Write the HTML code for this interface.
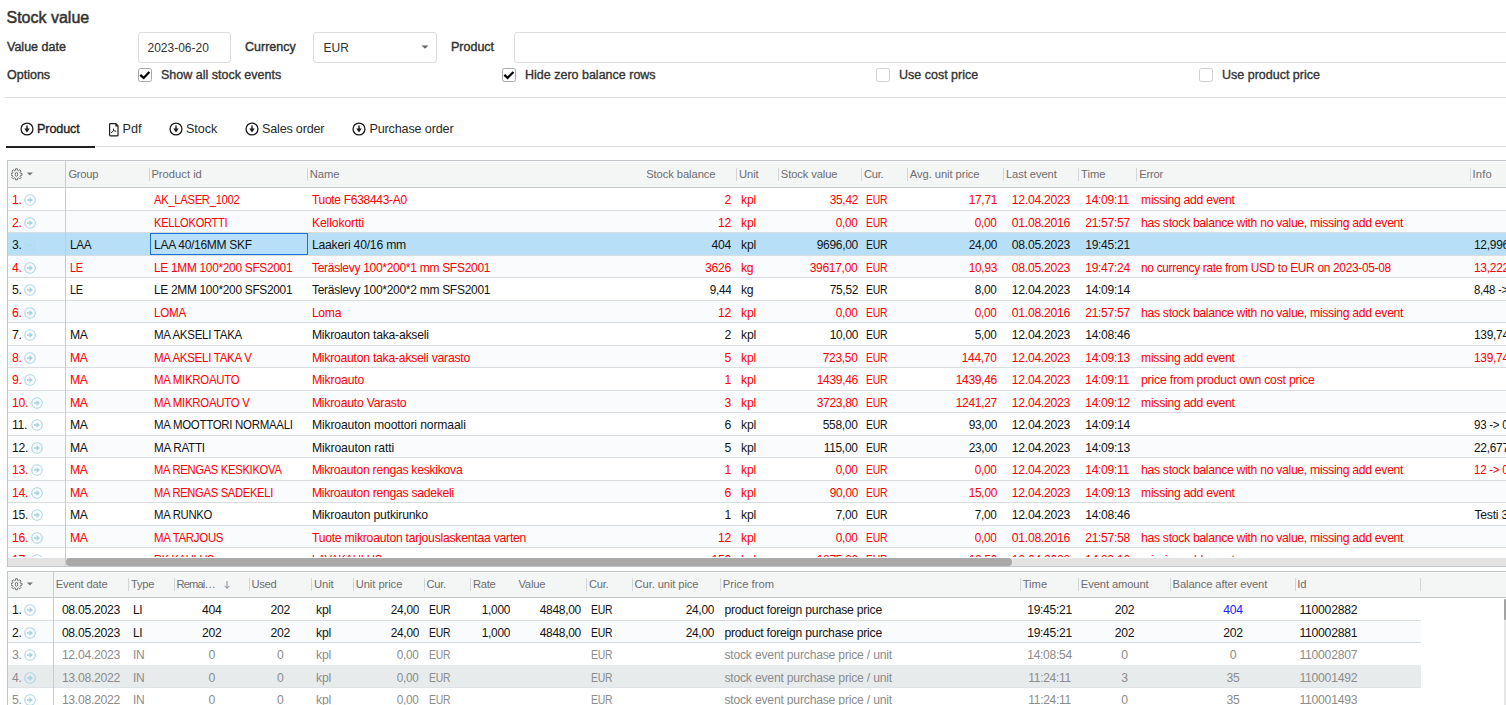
<!DOCTYPE html><html><head><meta charset="utf-8"><style>
*{box-sizing:border-box;margin:0;padding:0}
html,body{width:1506px;height:705px;overflow:hidden;background:#fff}
body{font-family:"Liberation Sans",sans-serif;color:#212121;position:relative}
.a{position:absolute;white-space:nowrap}
.ln{position:absolute}
.lbl{position:absolute;font-size:12.5px;color:#333;white-space:nowrap;line-height:14px;-webkit-text-stroke:0.4px #333}
.inp{position:absolute;border:1px solid #dcdcdc;border-radius:3px;background:#fff}
.cb{position:absolute;width:14px;height:14px;border:1px solid #a6a6a6;border-radius:2.5px;background:#fff}
.cbu{border-color:#cfcfcf}
.cbt{position:absolute;font-size:12.5px;color:#333;white-space:nowrap;-webkit-text-stroke:0.35px #333;line-height:14px}
.tab{position:absolute;font-size:12.6px;color:#2a2a2a;white-space:nowrap;top:121px;line-height:16px}
.hc{position:absolute;font-size:11.2px;color:#6e6e6e;white-space:nowrap;line-height:13px}
.c{position:absolute;font-size:12.2px;letter-spacing:-0.2px;white-space:nowrap;overflow:hidden;line-height:14px}
</style></head><body>
<div class="a" style="left:6.5px;top:8.5px;font-size:16px;color:#333;line-height:17px;-webkit-text-stroke:0.5px #333">Stock value</div>
<div class="lbl" style="left:7px;top:40px">Value date</div>
<div class="inp" style="left:138px;top:32px;width:93px;height:31px"></div>
<div class="a" style="left:147.5px;top:41px;font-size:12px;color:#333;line-height:14px">2023-06-20</div>
<div class="lbl" style="left:245px;top:40px">Currency</div>
<div class="inp" style="left:313px;top:32px;width:124px;height:31px"></div>
<div class="a" style="left:323.5px;top:41px;font-size:12px;color:#333;line-height:14px">EUR</div>
<svg class="a" style="left:421px;top:45px" width="8" height="4"><path d="M0.5 0.5H7.5L4 3.8Z" fill="#666"/></svg>
<div class="lbl" style="left:451px;top:40px">Product</div>
<div class="inp" style="left:514px;top:32px;width:1000px;height:31px"></div>
<div class="lbl" style="left:7px;top:68px">Options</div>
<div class="cb" style="left:138px;top:68px"><svg class="a" style="left:0px;top:0px" width="12" height="12" viewBox="0 0 12 12"><path d="M1.3 5.9L4.6 8.9L10.4 2.9" fill="none" stroke="#000" stroke-width="2.2"/></svg></div>
<div class="cbt" style="left:161px;top:68px">Show all stock events</div>
<div class="cb" style="left:502px;top:68px"><svg class="a" style="left:0px;top:0px" width="12" height="12" viewBox="0 0 12 12"><path d="M1.3 5.9L4.6 8.9L10.4 2.9" fill="none" stroke="#000" stroke-width="2.2"/></svg></div>
<div class="cbt" style="left:525px;top:68px">Hide zero balance rows</div>
<div class="cb cbu" style="left:876px;top:68px"></div>
<div class="cbt" style="left:899px;top:68px">Use cost price</div>
<div class="cb cbu" style="left:1199px;top:68px"></div>
<div class="cbt" style="left:1222px;top:68px">Use product price</div>
<div class="ln" style="left:5px;top:97px;width:1501px;height:1px;background:#dedede"></div>
<svg class="a" style="left:19.6px;top:122.4px" width="14" height="14" viewBox="0 0 14 14"><circle cx="7" cy="7" r="5.95" fill="none" stroke="#1a1a1a" stroke-width="1.3"/><path d="M7 3.6V8" stroke="#1a1a1a" stroke-width="1.4"/><path d="M4.3 6.6H9.7L7 10.4Z" fill="#1a1a1a"/></svg>
<div class="tab" style="left:37px;-webkit-text-stroke:0.35px #222;color:#222"><span style="letter-spacing:-0.105px">Product</span></div>
<svg class="a" style="left:108px;top:122px" width="12" height="15" viewBox="0 0 12 15"><path d="M2.4 1.6H7.9L10 3.7V13.1Q10 13.8 9.3 13.8H2.4Q1.6 13.8 1.6 13.1V2.4Q1.6 1.6 2.4 1.6Z" fill="none" stroke="#1a1a1a" stroke-width="1.2"/><path d="M7.4 1.6V4.4H10Z" fill="#1a1a1a"/><path d="M5.5 6.6V8.6L3.2 11M5.5 8.6L8.1 9.4" fill="none" stroke="#1a1a1a" stroke-width="0.95"/></svg>
<div class="tab" style="left:122.5px"><span style="letter-spacing:0.089px">Pdf</span></div>
<svg class="a" style="left:169px;top:122.4px" width="14" height="14" viewBox="0 0 14 14"><circle cx="7" cy="7" r="5.95" fill="none" stroke="#1a1a1a" stroke-width="1.3"/><path d="M7 3.6V8" stroke="#1a1a1a" stroke-width="1.4"/><path d="M4.3 6.6H9.7L7 10.4Z" fill="#1a1a1a"/></svg>
<div class="tab" style="left:186px"><span style="letter-spacing:-0.034px">Stock</span></div>
<svg class="a" style="left:245px;top:122.4px" width="14" height="14" viewBox="0 0 14 14"><circle cx="7" cy="7" r="5.95" fill="none" stroke="#1a1a1a" stroke-width="1.3"/><path d="M7 3.6V8" stroke="#1a1a1a" stroke-width="1.4"/><path d="M4.3 6.6H9.7L7 10.4Z" fill="#1a1a1a"/></svg>
<div class="tab" style="left:262px"><span style="letter-spacing:-0.192px">Sales order</span></div>
<svg class="a" style="left:351.8px;top:122.4px" width="14" height="14" viewBox="0 0 14 14"><circle cx="7" cy="7" r="5.95" fill="none" stroke="#1a1a1a" stroke-width="1.3"/><path d="M7 3.6V8" stroke="#1a1a1a" stroke-width="1.4"/><path d="M4.3 6.6H9.7L7 10.4Z" fill="#1a1a1a"/></svg>
<div class="tab" style="left:369.4px"><span style="letter-spacing:-0.142px">Purchase order</span></div>
<div class="ln" style="left:6px;top:146px;width:1500px;height:1px;background:#dcdcdc"></div>
<div class="ln" style="left:6px;top:146px;width:89px;height:2px;background:#222"></div>
<div class="a" style="left:0;top:0;width:1506px;height:567px;overflow:hidden">
<div class="ln" style="left:8px;top:161px;width:1498px;height:26px;background:#f4f5f5"></div>
<div class="ln" style="left:8px;top:161px;width:1498px;height:1px;background:#f9fafa"></div>
<div class="hc" style="left:68.4px;top:167.5px;letter-spacing:-0.240px">Group</div>
<div class="hc" style="left:151.4px;top:167.5px;letter-spacing:0.009px">Product id</div>
<div class="hc" style="left:309.8px;top:167.5px;letter-spacing:-0.094px">Name</div>
<div class="hc" style="left:515.5px;width:200px;text-align:right;top:167.5px;letter-spacing:-0.070px">Stock balance</div>
<div class="hc" style="left:739px;top:167.5px;letter-spacing:-0.076px">Unit</div>
<div class="hc" style="left:780.8px;top:167.5px;letter-spacing:-0.106px">Stock value</div>
<div class="hc" style="left:864px;top:167.5px;letter-spacing:-0.309px">Cur.</div>
<div class="hc" style="left:909.8px;top:167.5px;letter-spacing:-0.066px">Avg. unit price</div>
<div class="hc" style="left:1005.9px;top:167.5px;letter-spacing:-0.076px">Last event</div>
<div class="hc" style="left:1081px;top:167.5px;letter-spacing:-0.005px">Time</div>
<div class="hc" style="left:1139.3px;top:167.5px;letter-spacing:-0.205px">Error</div>
<div class="hc" style="left:1472.5px;top:167.5px;letter-spacing:0.153px">Info</div>
<div class="ln" style="left:149px;top:168px;width:1px;height:13px;background:#d3d6d9"></div>
<div class="ln" style="left:307px;top:168px;width:1px;height:13px;background:#d3d6d9"></div>
<div class="ln" style="left:736px;top:168px;width:1px;height:13px;background:#d3d6d9"></div>
<div class="ln" style="left:778px;top:168px;width:1px;height:13px;background:#d3d6d9"></div>
<div class="ln" style="left:861px;top:168px;width:1px;height:13px;background:#d3d6d9"></div>
<div class="ln" style="left:907px;top:168px;width:1px;height:13px;background:#d3d6d9"></div>
<div class="ln" style="left:1003px;top:168px;width:1px;height:13px;background:#d3d6d9"></div>
<div class="ln" style="left:1078px;top:168px;width:1px;height:13px;background:#d3d6d9"></div>
<div class="ln" style="left:1136px;top:168px;width:1px;height:13px;background:#d3d6d9"></div>
<div class="ln" style="left:1470px;top:168px;width:1px;height:13px;background:#d3d6d9"></div>
<svg class="a" style="left:11px;top:167.5px" width="26" height="14" viewBox="0 0 26 14"><path d="M4.45 2.34L4.55 0.78L6.45 0.78L6.55 2.34L7.56 2.75L8.73 1.73L10.07 3.07L9.05 4.24L9.46 5.25L11.02 5.35L11.02 7.25L9.46 7.35L9.05 8.36L10.07 9.53L8.73 10.87L7.56 9.85L6.55 10.26L6.45 11.82L4.55 11.82L4.45 10.26L3.44 9.85L2.27 10.87L0.93 9.53L1.95 8.36L1.54 7.35L-0.02 7.25L-0.02 5.35L1.54 5.25L1.95 4.24L0.93 3.07L2.27 1.73L3.44 2.75Z" fill="none" stroke="#6e6e6e" stroke-width="1"/><ellipse cx="5.5" cy="6.3" rx="1.25" ry="1.95" fill="none" stroke="#6e6e6e" stroke-width="1"/><path d="M15.9 4.5H21.9L18.9 7.5Z" fill="#747474"/></svg>
<div class="a" style="left:0;top:188px;width:1506px;height:369px;overflow:hidden">
<div class="a" style="left:8px;top:0px;width:1498px;height:23px;background:#fff;border-bottom:1px solid #d9dde0;color:#ff0000">
<div class="c" style="left:4px;top:4.5px;letter-spacing:-0.338px">1.</div>
<svg class="a" style="left:16px;top:6px;opacity:1.0" width="12" height="12" viewBox="0 0 12 12"><circle cx="6" cy="6" r="5.3" fill="none" stroke="#a8d4e2" stroke-width="1.05"/><path d="M3.0 6H6.6" stroke="#a8d4e2" stroke-width="1.6"/><path d="M5.5 3.1L9.0 6L5.5 8.9Z" fill="#a8d4e2"/></svg>
<div class="c" style="left:145.70000000000002px;width:153.69999999999996px;top:4.5px"><span style="display:inline-block;letter-spacing:-0.300px;transform:scaleX(0.9187);transform-origin:left">AK_LASER_1002</span></div>
<div class="c" style="left:303.9px;width:328.1px;top:4.5px"><span style="display:inline-block;letter-spacing:-0.300px;transform:scaleX(0.9841);transform-origin:left">Tuote F638443-A0</span></div>
<div class="c" style="left:632px;width:91.1px;text-align:right;top:4.5px"><span style="letter-spacing:-0.271px">2</span></div>
<div class="c" style="left:733.0px;width:37.5px;top:4.5px"><span style="letter-spacing:-0.146px">kpl</span></div>
<div class="c" style="left:770.5px;width:78.99999999999996px;text-align:right;top:4.5px"><span style="display:inline-block;letter-spacing:-0.300px;transform:scaleX(0.9742);transform-origin:right">35,42</span></div>
<div class="c" style="left:858.0px;width:41.40000000000002px;top:4.5px"><span style="display:inline-block;letter-spacing:-0.300px;transform:scaleX(0.8549);transform-origin:left">EUR</span></div>
<div class="c" style="left:899.4px;width:89.50000000000007px;text-align:right;top:4.5px"><span style="display:inline-block;letter-spacing:-0.300px;transform:scaleX(0.9742);transform-origin:right">17,71</span></div>
<div class="c" style="left:995.2px;width:75.39999999999986px;text-align:center;top:4.5px"><span style="letter-spacing:-0.298px">12.04.2023</span></div>
<div class="c" style="left:1070.6px;width:57.80000000000018px;text-align:center;top:4.5px"><span style="display:inline-block;letter-spacing:-0.300px;transform:scaleX(0.9886);transform-origin:center">14:09:11</span></div>
<div class="c" style="left:1133.0px;width:329.4999999999999px;top:4.5px"><span style="letter-spacing:-0.273px">missing add event</span></div>
</div>
<div class="a" style="left:8px;top:23px;width:1498px;height:22px;background:#fafbfd;border-bottom:1px solid #d9dde0;color:#ff0000">
<div class="c" style="left:4px;top:4.5px;letter-spacing:-0.338px">2.</div>
<svg class="a" style="left:16px;top:6px;opacity:1.0" width="12" height="12" viewBox="0 0 12 12"><circle cx="6" cy="6" r="5.3" fill="none" stroke="#a8d4e2" stroke-width="1.05"/><path d="M3.0 6H6.6" stroke="#a8d4e2" stroke-width="1.6"/><path d="M5.5 3.1L9.0 6L5.5 8.9Z" fill="#a8d4e2"/></svg>
<div class="c" style="left:145.70000000000002px;width:153.69999999999996px;top:4.5px"><span style="display:inline-block;letter-spacing:-0.300px;transform:scaleX(0.9125);transform-origin:left">KELLOKORTTI</span></div>
<div class="c" style="left:303.9px;width:328.1px;top:4.5px"><span style="letter-spacing:-0.107px">Kellokortti</span></div>
<div class="c" style="left:632px;width:91.1px;text-align:right;top:4.5px"><span style="letter-spacing:-0.271px">12</span></div>
<div class="c" style="left:733.0px;width:37.5px;top:4.5px"><span style="letter-spacing:-0.146px">kpl</span></div>
<div class="c" style="left:770.5px;width:78.99999999999996px;text-align:right;top:4.5px"><span style="display:inline-block;letter-spacing:-0.300px;transform:scaleX(0.9655);transform-origin:right">0,00</span></div>
<div class="c" style="left:858.0px;width:41.40000000000002px;top:4.5px"><span style="display:inline-block;letter-spacing:-0.300px;transform:scaleX(0.8549);transform-origin:left">EUR</span></div>
<div class="c" style="left:899.4px;width:89.50000000000007px;text-align:right;top:4.5px"><span style="display:inline-block;letter-spacing:-0.300px;transform:scaleX(0.9655);transform-origin:right">0,00</span></div>
<div class="c" style="left:995.2px;width:75.39999999999986px;text-align:center;top:4.5px"><span style="letter-spacing:-0.298px">01.08.2016</span></div>
<div class="c" style="left:1070.6px;width:57.80000000000018px;text-align:center;top:4.5px"><span style="display:inline-block;letter-spacing:-0.300px;transform:scaleX(0.9886);transform-origin:center">21:57:57</span></div>
<div class="c" style="left:1133.0px;width:329.4999999999999px;top:4.5px"><span style="letter-spacing:-0.298px">has stock balance with no value, missing add event</span></div>
</div>
<div class="a" style="left:8px;top:45px;width:1498px;height:23px;background:#b7e0f8;border-bottom:1px solid #d9dde0;color:#141414">
<div class="c" style="left:4px;top:4.5px;letter-spacing:-0.338px">3.</div>
<svg class="a" style="left:16px;top:6px;opacity:0.3" width="12" height="12" viewBox="0 0 12 12"><circle cx="6" cy="6" r="5.3" fill="none" stroke="#a8d4e2" stroke-width="1.05"/><path d="M3.0 6H6.6" stroke="#a8d4e2" stroke-width="1.6"/><path d="M5.5 3.1L9.0 6L5.5 8.9Z" fill="#a8d4e2"/></svg>
<div class="c" style="left:61.900000000000006px;width:79.5px;top:4.5px"><span style="display:inline-block;letter-spacing:-0.300px;transform:scaleX(0.9644);transform-origin:left">LAA</span></div>
<div class="c" style="left:145.70000000000002px;width:153.69999999999996px;top:4.5px"><span style="display:inline-block;letter-spacing:-0.300px;transform:scaleX(0.9873);transform-origin:left">LAA 40/16MM SKF</span></div>
<div class="c" style="left:303.9px;width:328.1px;top:4.5px"><span style="letter-spacing:-0.211px">Laakeri 40/16 mm</span></div>
<div class="c" style="left:632px;width:91.1px;text-align:right;top:4.5px"><span style="letter-spacing:-0.271px">404</span></div>
<div class="c" style="left:733.0px;width:37.5px;top:4.5px"><span style="letter-spacing:-0.146px">kpl</span></div>
<div class="c" style="left:770.5px;width:78.99999999999996px;text-align:right;top:4.5px"><span style="display:inline-block;letter-spacing:-0.300px;transform:scaleX(0.9835);transform-origin:right">9696,00</span></div>
<div class="c" style="left:858.0px;width:41.40000000000002px;top:4.5px"><span style="display:inline-block;letter-spacing:-0.300px;transform:scaleX(0.8549);transform-origin:left">EUR</span></div>
<div class="c" style="left:899.4px;width:89.50000000000007px;text-align:right;top:4.5px"><span style="display:inline-block;letter-spacing:-0.300px;transform:scaleX(0.9742);transform-origin:right">24,00</span></div>
<div class="c" style="left:995.2px;width:75.39999999999986px;text-align:center;top:4.5px"><span style="letter-spacing:-0.298px">08.05.2023</span></div>
<div class="c" style="left:1070.6px;width:57.80000000000018px;text-align:center;top:4.5px"><span style="display:inline-block;letter-spacing:-0.300px;transform:scaleX(0.9886);transform-origin:center">19:45:21</span></div>
<div class="c" style="left:1466.4px;width:85.6px;top:4.5px"><span style="display:inline-block;letter-spacing:-0.300px;transform:scaleX(0.9835);transform-origin:left">12,9966</span></div>
<div class="a" style="left:142px;top:0px;width:158px;height:22px;border:1px solid #1b73d3"></div>
</div>
<div class="a" style="left:8px;top:68px;width:1498px;height:22px;background:#fafbfd;border-bottom:1px solid #d9dde0;color:#ff0000">
<div class="c" style="left:4px;top:4.5px;letter-spacing:-0.338px">4.</div>
<svg class="a" style="left:16px;top:6px;opacity:1.0" width="12" height="12" viewBox="0 0 12 12"><circle cx="6" cy="6" r="5.3" fill="none" stroke="#a8d4e2" stroke-width="1.05"/><path d="M3.0 6H6.6" stroke="#a8d4e2" stroke-width="1.6"/><path d="M5.5 3.1L9.0 6L5.5 8.9Z" fill="#a8d4e2"/></svg>
<div class="c" style="left:61.900000000000006px;width:79.5px;top:4.5px"><span style="display:inline-block;letter-spacing:-0.300px;transform:scaleX(0.8957);transform-origin:left">LE</span></div>
<div class="c" style="left:145.70000000000002px;width:153.69999999999996px;top:4.5px"><span style="display:inline-block;letter-spacing:-0.300px;transform:scaleX(0.9752);transform-origin:left">LE 1MM 100*200 SFS2001</span></div>
<div class="c" style="left:303.9px;width:328.1px;top:4.5px"><span style="display:inline-block;letter-spacing:-0.300px;transform:scaleX(0.9862);transform-origin:left">Teräslevy 100*200*1 mm SFS2001</span></div>
<div class="c" style="left:632px;width:91.1px;text-align:right;top:4.5px"><span style="letter-spacing:-0.271px">3626</span></div>
<div class="c" style="left:733.0px;width:37.5px;top:4.5px"><span style="letter-spacing:-0.269px">kg</span></div>
<div class="c" style="left:770.5px;width:78.99999999999996px;text-align:right;top:4.5px"><span style="display:inline-block;letter-spacing:-0.300px;transform:scaleX(0.9863);transform-origin:right">39617,00</span></div>
<div class="c" style="left:858.0px;width:41.40000000000002px;top:4.5px"><span style="display:inline-block;letter-spacing:-0.300px;transform:scaleX(0.8549);transform-origin:left">EUR</span></div>
<div class="c" style="left:899.4px;width:89.50000000000007px;text-align:right;top:4.5px"><span style="display:inline-block;letter-spacing:-0.300px;transform:scaleX(0.9742);transform-origin:right">10,93</span></div>
<div class="c" style="left:995.2px;width:75.39999999999986px;text-align:center;top:4.5px"><span style="letter-spacing:-0.298px">08.05.2023</span></div>
<div class="c" style="left:1070.6px;width:57.80000000000018px;text-align:center;top:4.5px"><span style="display:inline-block;letter-spacing:-0.300px;transform:scaleX(0.9886);transform-origin:center">19:47:24</span></div>
<div class="c" style="left:1133.0px;width:329.4999999999999px;top:4.5px"><span style="display:inline-block;letter-spacing:-0.300px;transform:scaleX(0.9740);transform-origin:left">no currency rate from USD to EUR on 2023-05-08</span></div>
<div class="c" style="left:1466.4px;width:85.6px;top:4.5px"><span style="display:inline-block;letter-spacing:-0.300px;transform:scaleX(0.9835);transform-origin:left">13,2222</span></div>
</div>
<div class="a" style="left:8px;top:90px;width:1498px;height:23px;background:#fff;border-bottom:1px solid #d9dde0;color:#141414">
<div class="c" style="left:4px;top:4.5px;letter-spacing:-0.338px">5.</div>
<svg class="a" style="left:16px;top:6px;opacity:1.0" width="12" height="12" viewBox="0 0 12 12"><circle cx="6" cy="6" r="5.3" fill="none" stroke="#a8d4e2" stroke-width="1.05"/><path d="M3.0 6H6.6" stroke="#a8d4e2" stroke-width="1.6"/><path d="M5.5 3.1L9.0 6L5.5 8.9Z" fill="#a8d4e2"/></svg>
<div class="c" style="left:61.900000000000006px;width:79.5px;top:4.5px"><span style="display:inline-block;letter-spacing:-0.300px;transform:scaleX(0.8957);transform-origin:left">LE</span></div>
<div class="c" style="left:145.70000000000002px;width:153.69999999999996px;top:4.5px"><span style="display:inline-block;letter-spacing:-0.300px;transform:scaleX(0.9752);transform-origin:left">LE 2MM 100*200 SFS2001</span></div>
<div class="c" style="left:303.9px;width:328.1px;top:4.5px"><span style="display:inline-block;letter-spacing:-0.300px;transform:scaleX(0.9862);transform-origin:left">Teräslevy 100*200*2 mm SFS2001</span></div>
<div class="c" style="left:632px;width:91.1px;text-align:right;top:4.5px"><span style="display:inline-block;letter-spacing:-0.300px;transform:scaleX(0.9655);transform-origin:right">9,44</span></div>
<div class="c" style="left:733.0px;width:37.5px;top:4.5px"><span style="letter-spacing:-0.269px">kg</span></div>
<div class="c" style="left:770.5px;width:78.99999999999996px;text-align:right;top:4.5px"><span style="display:inline-block;letter-spacing:-0.300px;transform:scaleX(0.9742);transform-origin:right">75,52</span></div>
<div class="c" style="left:858.0px;width:41.40000000000002px;top:4.5px"><span style="display:inline-block;letter-spacing:-0.300px;transform:scaleX(0.8549);transform-origin:left">EUR</span></div>
<div class="c" style="left:899.4px;width:89.50000000000007px;text-align:right;top:4.5px"><span style="display:inline-block;letter-spacing:-0.300px;transform:scaleX(0.9655);transform-origin:right">8,00</span></div>
<div class="c" style="left:995.2px;width:75.39999999999986px;text-align:center;top:4.5px"><span style="letter-spacing:-0.298px">12.04.2023</span></div>
<div class="c" style="left:1070.6px;width:57.80000000000018px;text-align:center;top:4.5px"><span style="display:inline-block;letter-spacing:-0.300px;transform:scaleX(0.9886);transform-origin:center">14:09:14</span></div>
<div class="c" style="left:1466.4px;width:85.6px;top:4.5px"><span style="display:inline-block;letter-spacing:-0.300px;transform:scaleX(0.9400);transform-origin:left">8,48 -&gt; 8</span></div>
</div>
<div class="a" style="left:8px;top:113px;width:1498px;height:22px;background:#fafbfd;border-bottom:1px solid #d9dde0;color:#ff0000">
<div class="c" style="left:4px;top:4.5px;letter-spacing:-0.338px">6.</div>
<svg class="a" style="left:16px;top:6px;opacity:1.0" width="12" height="12" viewBox="0 0 12 12"><circle cx="6" cy="6" r="5.3" fill="none" stroke="#a8d4e2" stroke-width="1.05"/><path d="M3.0 6H6.6" stroke="#a8d4e2" stroke-width="1.6"/><path d="M5.5 3.1L9.0 6L5.5 8.9Z" fill="#a8d4e2"/></svg>
<div class="c" style="left:145.70000000000002px;width:153.69999999999996px;top:4.5px"><span style="display:inline-block;letter-spacing:-0.300px;transform:scaleX(0.9560);transform-origin:left">LOMA</span></div>
<div class="c" style="left:303.9px;width:328.1px;top:4.5px"><span style="letter-spacing:-0.300px">Loma</span></div>
<div class="c" style="left:632px;width:91.1px;text-align:right;top:4.5px"><span style="letter-spacing:-0.271px">12</span></div>
<div class="c" style="left:733.0px;width:37.5px;top:4.5px"><span style="letter-spacing:-0.146px">kpl</span></div>
<div class="c" style="left:770.5px;width:78.99999999999996px;text-align:right;top:4.5px"><span style="display:inline-block;letter-spacing:-0.300px;transform:scaleX(0.9655);transform-origin:right">0,00</span></div>
<div class="c" style="left:858.0px;width:41.40000000000002px;top:4.5px"><span style="display:inline-block;letter-spacing:-0.300px;transform:scaleX(0.8549);transform-origin:left">EUR</span></div>
<div class="c" style="left:899.4px;width:89.50000000000007px;text-align:right;top:4.5px"><span style="display:inline-block;letter-spacing:-0.300px;transform:scaleX(0.9655);transform-origin:right">0,00</span></div>
<div class="c" style="left:995.2px;width:75.39999999999986px;text-align:center;top:4.5px"><span style="letter-spacing:-0.298px">01.08.2016</span></div>
<div class="c" style="left:1070.6px;width:57.80000000000018px;text-align:center;top:4.5px"><span style="display:inline-block;letter-spacing:-0.300px;transform:scaleX(0.9886);transform-origin:center">21:57:57</span></div>
<div class="c" style="left:1133.0px;width:329.4999999999999px;top:4.5px"><span style="letter-spacing:-0.298px">has stock balance with no value, missing add event</span></div>
</div>
<div class="a" style="left:8px;top:135px;width:1498px;height:23px;background:#fff;border-bottom:1px solid #d9dde0;color:#141414">
<div class="c" style="left:4px;top:4.5px;letter-spacing:-0.338px">7.</div>
<svg class="a" style="left:16px;top:6px;opacity:1.0" width="12" height="12" viewBox="0 0 12 12"><circle cx="6" cy="6" r="5.3" fill="none" stroke="#a8d4e2" stroke-width="1.05"/><path d="M3.0 6H6.6" stroke="#a8d4e2" stroke-width="1.6"/><path d="M5.5 3.1L9.0 6L5.5 8.9Z" fill="#a8d4e2"/></svg>
<div class="c" style="left:61.900000000000006px;width:79.5px;top:4.5px"><span style="letter-spacing:-0.300px">MA</span></div>
<div class="c" style="left:145.70000000000002px;width:153.69999999999996px;top:4.5px"><span style="display:inline-block;letter-spacing:-0.300px;transform:scaleX(0.9477);transform-origin:left">MA AKSELI TAKA</span></div>
<div class="c" style="left:303.9px;width:328.1px;top:4.5px"><span style="letter-spacing:-0.233px">Mikroauton taka-akseli</span></div>
<div class="c" style="left:632px;width:91.1px;text-align:right;top:4.5px"><span style="letter-spacing:-0.271px">2</span></div>
<div class="c" style="left:733.0px;width:37.5px;top:4.5px"><span style="letter-spacing:-0.146px">kpl</span></div>
<div class="c" style="left:770.5px;width:78.99999999999996px;text-align:right;top:4.5px"><span style="display:inline-block;letter-spacing:-0.300px;transform:scaleX(0.9742);transform-origin:right">10,00</span></div>
<div class="c" style="left:858.0px;width:41.40000000000002px;top:4.5px"><span style="display:inline-block;letter-spacing:-0.300px;transform:scaleX(0.8549);transform-origin:left">EUR</span></div>
<div class="c" style="left:899.4px;width:89.50000000000007px;text-align:right;top:4.5px"><span style="display:inline-block;letter-spacing:-0.300px;transform:scaleX(0.9655);transform-origin:right">5,00</span></div>
<div class="c" style="left:995.2px;width:75.39999999999986px;text-align:center;top:4.5px"><span style="letter-spacing:-0.298px">12.04.2023</span></div>
<div class="c" style="left:1070.6px;width:57.80000000000018px;text-align:center;top:4.5px"><span style="display:inline-block;letter-spacing:-0.300px;transform:scaleX(0.9886);transform-origin:center">14:08:46</span></div>
<div class="c" style="left:1466.4px;width:85.6px;top:4.5px"><span style="display:inline-block;letter-spacing:-0.300px;transform:scaleX(0.9797);transform-origin:left">139,74</span></div>
</div>
<div class="a" style="left:8px;top:158px;width:1498px;height:22px;background:#fafbfd;border-bottom:1px solid #d9dde0;color:#ff0000">
<div class="c" style="left:4px;top:4.5px;letter-spacing:-0.338px">8.</div>
<svg class="a" style="left:16px;top:6px;opacity:1.0" width="12" height="12" viewBox="0 0 12 12"><circle cx="6" cy="6" r="5.3" fill="none" stroke="#a8d4e2" stroke-width="1.05"/><path d="M3.0 6H6.6" stroke="#a8d4e2" stroke-width="1.6"/><path d="M5.5 3.1L9.0 6L5.5 8.9Z" fill="#a8d4e2"/></svg>
<div class="c" style="left:61.900000000000006px;width:79.5px;top:4.5px"><span style="letter-spacing:-0.300px">MA</span></div>
<div class="c" style="left:145.70000000000002px;width:153.69999999999996px;top:4.5px"><span style="display:inline-block;letter-spacing:-0.300px;transform:scaleX(0.9467);transform-origin:left">MA AKSELI TAKA V</span></div>
<div class="c" style="left:303.9px;width:328.1px;top:4.5px"><span style="letter-spacing:-0.239px">Mikroauton taka-akseli varasto</span></div>
<div class="c" style="left:632px;width:91.1px;text-align:right;top:4.5px"><span style="letter-spacing:-0.271px">5</span></div>
<div class="c" style="left:733.0px;width:37.5px;top:4.5px"><span style="letter-spacing:-0.146px">kpl</span></div>
<div class="c" style="left:770.5px;width:78.99999999999996px;text-align:right;top:4.5px"><span style="display:inline-block;letter-spacing:-0.300px;transform:scaleX(0.9797);transform-origin:right">723,50</span></div>
<div class="c" style="left:858.0px;width:41.40000000000002px;top:4.5px"><span style="display:inline-block;letter-spacing:-0.300px;transform:scaleX(0.8549);transform-origin:left">EUR</span></div>
<div class="c" style="left:899.4px;width:89.50000000000007px;text-align:right;top:4.5px"><span style="display:inline-block;letter-spacing:-0.300px;transform:scaleX(0.9797);transform-origin:right">144,70</span></div>
<div class="c" style="left:995.2px;width:75.39999999999986px;text-align:center;top:4.5px"><span style="letter-spacing:-0.298px">12.04.2023</span></div>
<div class="c" style="left:1070.6px;width:57.80000000000018px;text-align:center;top:4.5px"><span style="display:inline-block;letter-spacing:-0.300px;transform:scaleX(0.9886);transform-origin:center">14:09:13</span></div>
<div class="c" style="left:1133.0px;width:329.4999999999999px;top:4.5px"><span style="letter-spacing:-0.273px">missing add event</span></div>
<div class="c" style="left:1466.4px;width:85.6px;top:4.5px"><span style="display:inline-block;letter-spacing:-0.300px;transform:scaleX(0.9797);transform-origin:left">139,74</span></div>
</div>
<div class="a" style="left:8px;top:180px;width:1498px;height:23px;background:#fff;border-bottom:1px solid #d9dde0;color:#ff0000">
<div class="c" style="left:4px;top:4.5px;letter-spacing:-0.338px">9.</div>
<svg class="a" style="left:16px;top:6px;opacity:1.0" width="12" height="12" viewBox="0 0 12 12"><circle cx="6" cy="6" r="5.3" fill="none" stroke="#a8d4e2" stroke-width="1.05"/><path d="M3.0 6H6.6" stroke="#a8d4e2" stroke-width="1.6"/><path d="M5.5 3.1L9.0 6L5.5 8.9Z" fill="#a8d4e2"/></svg>
<div class="c" style="left:61.900000000000006px;width:79.5px;top:4.5px"><span style="letter-spacing:-0.300px">MA</span></div>
<div class="c" style="left:145.70000000000002px;width:153.69999999999996px;top:4.5px"><span style="display:inline-block;letter-spacing:-0.300px;transform:scaleX(0.9375);transform-origin:left">MA MIKROAUTO</span></div>
<div class="c" style="left:303.9px;width:328.1px;top:4.5px"><span style="letter-spacing:-0.131px">Mikroauto</span></div>
<div class="c" style="left:632px;width:91.1px;text-align:right;top:4.5px"><span style="letter-spacing:-0.271px">1</span></div>
<div class="c" style="left:733.0px;width:37.5px;top:4.5px"><span style="letter-spacing:-0.146px">kpl</span></div>
<div class="c" style="left:770.5px;width:78.99999999999996px;text-align:right;top:4.5px"><span style="display:inline-block;letter-spacing:-0.300px;transform:scaleX(0.9835);transform-origin:right">1439,46</span></div>
<div class="c" style="left:858.0px;width:41.40000000000002px;top:4.5px"><span style="display:inline-block;letter-spacing:-0.300px;transform:scaleX(0.8549);transform-origin:left">EUR</span></div>
<div class="c" style="left:899.4px;width:89.50000000000007px;text-align:right;top:4.5px"><span style="display:inline-block;letter-spacing:-0.300px;transform:scaleX(0.9835);transform-origin:right">1439,46</span></div>
<div class="c" style="left:995.2px;width:75.39999999999986px;text-align:center;top:4.5px"><span style="letter-spacing:-0.298px">12.04.2023</span></div>
<div class="c" style="left:1070.6px;width:57.80000000000018px;text-align:center;top:4.5px"><span style="display:inline-block;letter-spacing:-0.300px;transform:scaleX(0.9886);transform-origin:center">14:09:11</span></div>
<div class="c" style="left:1133.0px;width:329.4999999999999px;top:4.5px"><span style="letter-spacing:-0.181px">price from product own cost price</span></div>
</div>
<div class="a" style="left:8px;top:203px;width:1498px;height:22px;background:#fafbfd;border-bottom:1px solid #d9dde0;color:#ff0000">
<div class="c" style="left:4px;top:4.5px;letter-spacing:-0.316px">10.</div>
<svg class="a" style="left:22.5px;top:6px;opacity:1.0" width="12" height="12" viewBox="0 0 12 12"><circle cx="6" cy="6" r="5.3" fill="none" stroke="#a8d4e2" stroke-width="1.05"/><path d="M3.0 6H6.6" stroke="#a8d4e2" stroke-width="1.6"/><path d="M5.5 3.1L9.0 6L5.5 8.9Z" fill="#a8d4e2"/></svg>
<div class="c" style="left:61.900000000000006px;width:79.5px;top:4.5px"><span style="letter-spacing:-0.300px">MA</span></div>
<div class="c" style="left:145.70000000000002px;width:153.69999999999996px;top:4.5px"><span style="display:inline-block;letter-spacing:-0.300px;transform:scaleX(0.9376);transform-origin:left">MA MIKROAUTO V</span></div>
<div class="c" style="left:303.9px;width:328.1px;top:4.5px"><span style="letter-spacing:-0.204px">Mikroauto Varasto</span></div>
<div class="c" style="left:632px;width:91.1px;text-align:right;top:4.5px"><span style="letter-spacing:-0.271px">3</span></div>
<div class="c" style="left:733.0px;width:37.5px;top:4.5px"><span style="letter-spacing:-0.146px">kpl</span></div>
<div class="c" style="left:770.5px;width:78.99999999999996px;text-align:right;top:4.5px"><span style="display:inline-block;letter-spacing:-0.300px;transform:scaleX(0.9835);transform-origin:right">3723,80</span></div>
<div class="c" style="left:858.0px;width:41.40000000000002px;top:4.5px"><span style="display:inline-block;letter-spacing:-0.300px;transform:scaleX(0.8549);transform-origin:left">EUR</span></div>
<div class="c" style="left:899.4px;width:89.50000000000007px;text-align:right;top:4.5px"><span style="display:inline-block;letter-spacing:-0.300px;transform:scaleX(0.9835);transform-origin:right">1241,27</span></div>
<div class="c" style="left:995.2px;width:75.39999999999986px;text-align:center;top:4.5px"><span style="letter-spacing:-0.298px">12.04.2023</span></div>
<div class="c" style="left:1070.6px;width:57.80000000000018px;text-align:center;top:4.5px"><span style="display:inline-block;letter-spacing:-0.300px;transform:scaleX(0.9886);transform-origin:center">14:09:12</span></div>
<div class="c" style="left:1133.0px;width:329.4999999999999px;top:4.5px"><span style="letter-spacing:-0.273px">missing add event</span></div>
</div>
<div class="a" style="left:8px;top:225px;width:1498px;height:23px;background:#fff;border-bottom:1px solid #d9dde0;color:#141414">
<div class="c" style="left:4px;top:4.5px;letter-spacing:-0.316px">11.</div>
<svg class="a" style="left:22.5px;top:6px;opacity:1.0" width="12" height="12" viewBox="0 0 12 12"><circle cx="6" cy="6" r="5.3" fill="none" stroke="#a8d4e2" stroke-width="1.05"/><path d="M3.0 6H6.6" stroke="#a8d4e2" stroke-width="1.6"/><path d="M5.5 3.1L9.0 6L5.5 8.9Z" fill="#a8d4e2"/></svg>
<div class="c" style="left:61.900000000000006px;width:79.5px;top:4.5px"><span style="letter-spacing:-0.300px">MA</span></div>
<div class="c" style="left:145.70000000000002px;width:153.69999999999996px;top:4.5px"><span style="display:inline-block;letter-spacing:-0.300px;transform:scaleX(0.9402);transform-origin:left">MA MOOTTORI NORMAALI</span></div>
<div class="c" style="left:303.9px;width:328.1px;top:4.5px"><span style="letter-spacing:-0.142px">Mikroauton moottori normaali</span></div>
<div class="c" style="left:632px;width:91.1px;text-align:right;top:4.5px"><span style="letter-spacing:-0.271px">6</span></div>
<div class="c" style="left:733.0px;width:37.5px;top:4.5px"><span style="letter-spacing:-0.146px">kpl</span></div>
<div class="c" style="left:770.5px;width:78.99999999999996px;text-align:right;top:4.5px"><span style="display:inline-block;letter-spacing:-0.300px;transform:scaleX(0.9797);transform-origin:right">558,00</span></div>
<div class="c" style="left:858.0px;width:41.40000000000002px;top:4.5px"><span style="display:inline-block;letter-spacing:-0.300px;transform:scaleX(0.8549);transform-origin:left">EUR</span></div>
<div class="c" style="left:899.4px;width:89.50000000000007px;text-align:right;top:4.5px"><span style="display:inline-block;letter-spacing:-0.300px;transform:scaleX(0.9742);transform-origin:right">93,00</span></div>
<div class="c" style="left:995.2px;width:75.39999999999986px;text-align:center;top:4.5px"><span style="letter-spacing:-0.298px">12.04.2023</span></div>
<div class="c" style="left:1070.6px;width:57.80000000000018px;text-align:center;top:4.5px"><span style="display:inline-block;letter-spacing:-0.300px;transform:scaleX(0.9886);transform-origin:center">14:09:14</span></div>
<div class="c" style="left:1466.4px;width:85.6px;top:4.5px"><span style="display:inline-block;letter-spacing:-0.300px;transform:scaleX(0.9471);transform-origin:left">93 -&gt; 0</span></div>
</div>
<div class="a" style="left:8px;top:248px;width:1498px;height:22px;background:#fafbfd;border-bottom:1px solid #d9dde0;color:#141414">
<div class="c" style="left:4px;top:4.5px;letter-spacing:-0.316px">12.</div>
<svg class="a" style="left:22.5px;top:6px;opacity:1.0" width="12" height="12" viewBox="0 0 12 12"><circle cx="6" cy="6" r="5.3" fill="none" stroke="#a8d4e2" stroke-width="1.05"/><path d="M3.0 6H6.6" stroke="#a8d4e2" stroke-width="1.6"/><path d="M5.5 3.1L9.0 6L5.5 8.9Z" fill="#a8d4e2"/></svg>
<div class="c" style="left:61.900000000000006px;width:79.5px;top:4.5px"><span style="letter-spacing:-0.300px">MA</span></div>
<div class="c" style="left:145.70000000000002px;width:153.69999999999996px;top:4.5px"><span style="display:inline-block;letter-spacing:-0.300px;transform:scaleX(0.9585);transform-origin:left">MA RATTI</span></div>
<div class="c" style="left:303.9px;width:328.1px;top:4.5px"><span style="letter-spacing:-0.115px">Mikroauton ratti</span></div>
<div class="c" style="left:632px;width:91.1px;text-align:right;top:4.5px"><span style="letter-spacing:-0.271px">5</span></div>
<div class="c" style="left:733.0px;width:37.5px;top:4.5px"><span style="letter-spacing:-0.146px">kpl</span></div>
<div class="c" style="left:770.5px;width:78.99999999999996px;text-align:right;top:4.5px"><span style="display:inline-block;letter-spacing:-0.300px;transform:scaleX(0.9797);transform-origin:right">115,00</span></div>
<div class="c" style="left:858.0px;width:41.40000000000002px;top:4.5px"><span style="display:inline-block;letter-spacing:-0.300px;transform:scaleX(0.8549);transform-origin:left">EUR</span></div>
<div class="c" style="left:899.4px;width:89.50000000000007px;text-align:right;top:4.5px"><span style="display:inline-block;letter-spacing:-0.300px;transform:scaleX(0.9742);transform-origin:right">23,00</span></div>
<div class="c" style="left:995.2px;width:75.39999999999986px;text-align:center;top:4.5px"><span style="letter-spacing:-0.298px">12.04.2023</span></div>
<div class="c" style="left:1070.6px;width:57.80000000000018px;text-align:center;top:4.5px"><span style="display:inline-block;letter-spacing:-0.300px;transform:scaleX(0.9886);transform-origin:center">14:09:13</span></div>
<div class="c" style="left:1466.4px;width:85.6px;top:4.5px"><span style="display:inline-block;letter-spacing:-0.300px;transform:scaleX(0.9797);transform-origin:left">22,677</span></div>
</div>
<div class="a" style="left:8px;top:270px;width:1498px;height:23px;background:#fff;border-bottom:1px solid #d9dde0;color:#ff0000">
<div class="c" style="left:4px;top:4.5px;letter-spacing:-0.316px">13.</div>
<svg class="a" style="left:22.5px;top:6px;opacity:1.0" width="12" height="12" viewBox="0 0 12 12"><circle cx="6" cy="6" r="5.3" fill="none" stroke="#a8d4e2" stroke-width="1.05"/><path d="M3.0 6H6.6" stroke="#a8d4e2" stroke-width="1.6"/><path d="M5.5 3.1L9.0 6L5.5 8.9Z" fill="#a8d4e2"/></svg>
<div class="c" style="left:61.900000000000006px;width:79.5px;top:4.5px"><span style="letter-spacing:-0.300px">MA</span></div>
<div class="c" style="left:145.70000000000002px;width:153.69999999999996px;top:4.5px"><span style="display:inline-block;letter-spacing:-0.300px;transform:scaleX(0.9177);transform-origin:left">MA RENGAS KESKIKOVA</span></div>
<div class="c" style="left:303.9px;width:328.1px;top:4.5px"><span style="letter-spacing:-0.270px">Mikroauton rengas keskikova</span></div>
<div class="c" style="left:632px;width:91.1px;text-align:right;top:4.5px"><span style="letter-spacing:-0.271px">1</span></div>
<div class="c" style="left:733.0px;width:37.5px;top:4.5px"><span style="letter-spacing:-0.146px">kpl</span></div>
<div class="c" style="left:770.5px;width:78.99999999999996px;text-align:right;top:4.5px"><span style="display:inline-block;letter-spacing:-0.300px;transform:scaleX(0.9655);transform-origin:right">0,00</span></div>
<div class="c" style="left:858.0px;width:41.40000000000002px;top:4.5px"><span style="display:inline-block;letter-spacing:-0.300px;transform:scaleX(0.8549);transform-origin:left">EUR</span></div>
<div class="c" style="left:899.4px;width:89.50000000000007px;text-align:right;top:4.5px"><span style="display:inline-block;letter-spacing:-0.300px;transform:scaleX(0.9655);transform-origin:right">0,00</span></div>
<div class="c" style="left:995.2px;width:75.39999999999986px;text-align:center;top:4.5px"><span style="letter-spacing:-0.298px">12.04.2023</span></div>
<div class="c" style="left:1070.6px;width:57.80000000000018px;text-align:center;top:4.5px"><span style="display:inline-block;letter-spacing:-0.300px;transform:scaleX(0.9886);transform-origin:center">14:09:11</span></div>
<div class="c" style="left:1133.0px;width:329.4999999999999px;top:4.5px"><span style="letter-spacing:-0.298px">has stock balance with no value, missing add event</span></div>
<div class="c" style="left:1466.4px;width:85.6px;top:4.5px"><span style="display:inline-block;letter-spacing:-0.300px;transform:scaleX(0.9471);transform-origin:left">12 -&gt; 0</span></div>
</div>
<div class="a" style="left:8px;top:293px;width:1498px;height:22px;background:#fafbfd;border-bottom:1px solid #d9dde0;color:#ff0000">
<div class="c" style="left:4px;top:4.5px;letter-spacing:-0.316px">14.</div>
<svg class="a" style="left:22.5px;top:6px;opacity:1.0" width="12" height="12" viewBox="0 0 12 12"><circle cx="6" cy="6" r="5.3" fill="none" stroke="#a8d4e2" stroke-width="1.05"/><path d="M3.0 6H6.6" stroke="#a8d4e2" stroke-width="1.6"/><path d="M5.5 3.1L9.0 6L5.5 8.9Z" fill="#a8d4e2"/></svg>
<div class="c" style="left:61.900000000000006px;width:79.5px;top:4.5px"><span style="letter-spacing:-0.300px">MA</span></div>
<div class="c" style="left:145.70000000000002px;width:153.69999999999996px;top:4.5px"><span style="display:inline-block;letter-spacing:-0.300px;transform:scaleX(0.9146);transform-origin:left">MA RENGAS SADEKELI</span></div>
<div class="c" style="left:303.9px;width:328.1px;top:4.5px"><span style="letter-spacing:-0.267px">Mikroauton rengas sadekeli</span></div>
<div class="c" style="left:632px;width:91.1px;text-align:right;top:4.5px"><span style="letter-spacing:-0.271px">6</span></div>
<div class="c" style="left:733.0px;width:37.5px;top:4.5px"><span style="letter-spacing:-0.146px">kpl</span></div>
<div class="c" style="left:770.5px;width:78.99999999999996px;text-align:right;top:4.5px"><span style="display:inline-block;letter-spacing:-0.300px;transform:scaleX(0.9742);transform-origin:right">90,00</span></div>
<div class="c" style="left:858.0px;width:41.40000000000002px;top:4.5px"><span style="display:inline-block;letter-spacing:-0.300px;transform:scaleX(0.8549);transform-origin:left">EUR</span></div>
<div class="c" style="left:899.4px;width:89.50000000000007px;text-align:right;top:4.5px"><span style="display:inline-block;letter-spacing:-0.300px;transform:scaleX(0.9742);transform-origin:right">15,00</span></div>
<div class="c" style="left:995.2px;width:75.39999999999986px;text-align:center;top:4.5px"><span style="letter-spacing:-0.298px">12.04.2023</span></div>
<div class="c" style="left:1070.6px;width:57.80000000000018px;text-align:center;top:4.5px"><span style="display:inline-block;letter-spacing:-0.300px;transform:scaleX(0.9886);transform-origin:center">14:09:13</span></div>
<div class="c" style="left:1133.0px;width:329.4999999999999px;top:4.5px"><span style="letter-spacing:-0.273px">missing add event</span></div>
</div>
<div class="a" style="left:8px;top:315px;width:1498px;height:23px;background:#fff;border-bottom:1px solid #d9dde0;color:#141414">
<div class="c" style="left:4px;top:4.5px;letter-spacing:-0.316px">15.</div>
<svg class="a" style="left:22.5px;top:6px;opacity:1.0" width="12" height="12" viewBox="0 0 12 12"><circle cx="6" cy="6" r="5.3" fill="none" stroke="#a8d4e2" stroke-width="1.05"/><path d="M3.0 6H6.6" stroke="#a8d4e2" stroke-width="1.6"/><path d="M5.5 3.1L9.0 6L5.5 8.9Z" fill="#a8d4e2"/></svg>
<div class="c" style="left:61.900000000000006px;width:79.5px;top:4.5px"><span style="letter-spacing:-0.300px">MA</span></div>
<div class="c" style="left:145.70000000000002px;width:153.69999999999996px;top:4.5px"><span style="display:inline-block;letter-spacing:-0.300px;transform:scaleX(0.9273);transform-origin:left">MA RUNKO</span></div>
<div class="c" style="left:303.9px;width:328.1px;top:4.5px"><span style="letter-spacing:-0.188px">Mikroauton putkirunko</span></div>
<div class="c" style="left:632px;width:91.1px;text-align:right;top:4.5px"><span style="letter-spacing:-0.271px">1</span></div>
<div class="c" style="left:733.0px;width:37.5px;top:4.5px"><span style="letter-spacing:-0.146px">kpl</span></div>
<div class="c" style="left:770.5px;width:78.99999999999996px;text-align:right;top:4.5px"><span style="display:inline-block;letter-spacing:-0.300px;transform:scaleX(0.9655);transform-origin:right">7,00</span></div>
<div class="c" style="left:858.0px;width:41.40000000000002px;top:4.5px"><span style="display:inline-block;letter-spacing:-0.300px;transform:scaleX(0.8549);transform-origin:left">EUR</span></div>
<div class="c" style="left:899.4px;width:89.50000000000007px;text-align:right;top:4.5px"><span style="display:inline-block;letter-spacing:-0.300px;transform:scaleX(0.9655);transform-origin:right">7,00</span></div>
<div class="c" style="left:995.2px;width:75.39999999999986px;text-align:center;top:4.5px"><span style="letter-spacing:-0.298px">12.04.2023</span></div>
<div class="c" style="left:1070.6px;width:57.80000000000018px;text-align:center;top:4.5px"><span style="display:inline-block;letter-spacing:-0.300px;transform:scaleX(0.9886);transform-origin:center">14:08:46</span></div>
<div class="c" style="left:1466.4px;width:85.6px;top:4.5px"><span style="letter-spacing:-0.228px">Testi 3</span></div>
</div>
<div class="a" style="left:8px;top:338px;width:1498px;height:22px;background:#fafbfd;border-bottom:1px solid #d9dde0;color:#ff0000">
<div class="c" style="left:4px;top:4.5px;letter-spacing:-0.316px">16.</div>
<svg class="a" style="left:22.5px;top:6px;opacity:1.0" width="12" height="12" viewBox="0 0 12 12"><circle cx="6" cy="6" r="5.3" fill="none" stroke="#a8d4e2" stroke-width="1.05"/><path d="M3.0 6H6.6" stroke="#a8d4e2" stroke-width="1.6"/><path d="M5.5 3.1L9.0 6L5.5 8.9Z" fill="#a8d4e2"/></svg>
<div class="c" style="left:61.900000000000006px;width:79.5px;top:4.5px"><span style="letter-spacing:-0.300px">MA</span></div>
<div class="c" style="left:145.70000000000002px;width:153.69999999999996px;top:4.5px"><span style="display:inline-block;letter-spacing:-0.300px;transform:scaleX(0.9384);transform-origin:left">MA TARJOUS</span></div>
<div class="c" style="left:303.9px;width:328.1px;top:4.5px"><span style="letter-spacing:-0.239px">Tuote mikroauton tarjouslaskentaa varten</span></div>
<div class="c" style="left:632px;width:91.1px;text-align:right;top:4.5px"><span style="letter-spacing:-0.271px">12</span></div>
<div class="c" style="left:733.0px;width:37.5px;top:4.5px"><span style="letter-spacing:-0.146px">kpl</span></div>
<div class="c" style="left:770.5px;width:78.99999999999996px;text-align:right;top:4.5px"><span style="display:inline-block;letter-spacing:-0.300px;transform:scaleX(0.9655);transform-origin:right">0,00</span></div>
<div class="c" style="left:858.0px;width:41.40000000000002px;top:4.5px"><span style="display:inline-block;letter-spacing:-0.300px;transform:scaleX(0.8549);transform-origin:left">EUR</span></div>
<div class="c" style="left:899.4px;width:89.50000000000007px;text-align:right;top:4.5px"><span style="display:inline-block;letter-spacing:-0.300px;transform:scaleX(0.9655);transform-origin:right">0,00</span></div>
<div class="c" style="left:995.2px;width:75.39999999999986px;text-align:center;top:4.5px"><span style="letter-spacing:-0.298px">01.08.2016</span></div>
<div class="c" style="left:1070.6px;width:57.80000000000018px;text-align:center;top:4.5px"><span style="display:inline-block;letter-spacing:-0.300px;transform:scaleX(0.9886);transform-origin:center">21:57:58</span></div>
<div class="c" style="left:1133.0px;width:329.4999999999999px;top:4.5px"><span style="letter-spacing:-0.298px">has stock balance with no value, missing add event</span></div>
</div>
<div class="a" style="left:8px;top:360px;width:1498px;height:23px;background:#fff;border-bottom:1px solid #d9dde0;color:#ff0000">
<div class="c" style="left:4px;top:4.5px;letter-spacing:-0.316px">17.</div>
<svg class="a" style="left:22.5px;top:6px;opacity:1.0" width="12" height="12" viewBox="0 0 12 12"><circle cx="6" cy="6" r="5.3" fill="none" stroke="#a8d4e2" stroke-width="1.05"/><path d="M3.0 6H6.6" stroke="#a8d4e2" stroke-width="1.6"/><path d="M5.5 3.1L9.0 6L5.5 8.9Z" fill="#a8d4e2"/></svg>
<div class="c" style="left:145.70000000000002px;width:153.69999999999996px;top:4.5px"><span style="display:inline-block;letter-spacing:-0.300px;transform:scaleX(0.9071);transform-origin:left">RK KAULUS</span></div>
<div class="c" style="left:303.9px;width:328.1px;top:4.5px"><span style="display:inline-block;letter-spacing:-0.300px;transform:scaleX(0.9317);transform-origin:left">LAVAKAULUS</span></div>
<div class="c" style="left:632px;width:91.1px;text-align:right;top:4.5px"><span style="letter-spacing:-0.271px">150</span></div>
<div class="c" style="left:733.0px;width:37.5px;top:4.5px"><span style="letter-spacing:-0.146px">kpl</span></div>
<div class="c" style="left:770.5px;width:78.99999999999996px;text-align:right;top:4.5px"><span style="display:inline-block;letter-spacing:-0.300px;transform:scaleX(0.9835);transform-origin:right">1875,00</span></div>
<div class="c" style="left:858.0px;width:41.40000000000002px;top:4.5px"><span style="display:inline-block;letter-spacing:-0.300px;transform:scaleX(0.8549);transform-origin:left">EUR</span></div>
<div class="c" style="left:899.4px;width:89.50000000000007px;text-align:right;top:4.5px"><span style="display:inline-block;letter-spacing:-0.300px;transform:scaleX(0.9742);transform-origin:right">12,50</span></div>
<div class="c" style="left:995.2px;width:75.39999999999986px;text-align:center;top:4.5px"><span style="letter-spacing:-0.298px">12.04.2023</span></div>
<div class="c" style="left:1070.6px;width:57.80000000000018px;text-align:center;top:4.5px"><span style="display:inline-block;letter-spacing:-0.300px;transform:scaleX(0.9886);transform-origin:center">14:09:16</span></div>
<div class="c" style="left:1133.0px;width:329.4999999999999px;top:4.5px"><span style="letter-spacing:-0.273px">missing add event</span></div>
</div>
</div>
<div class="ln" style="left:7px;top:160px;width:1499px;height:1px;background:#c0c6ca"></div>
<div class="ln" style="left:8px;top:187px;width:1498px;height:1px;background:#c0c6ca"></div>
<div class="ln" style="left:7px;top:160px;width:1px;height:407px;background:#c0c6ca"></div>
<div class="ln" style="left:65px;top:161px;width:1px;height:405px;background:#c8cccf"></div>
<div class="ln" style="left:8px;top:558px;width:1498px;height:8px;background:#e3e3e3"></div>
<div class="ln" style="left:65px;top:558px;width:1px;height:8px;background:#c8cccf"></div>
<div class="a" style="left:66px;width:946px;top:558px;height:8px;border-radius:4px;background:#a9a9a9"></div>
<div class="ln" style="left:7px;top:566px;width:1499px;height:1px;background:#c0c6ca"></div>
</div>
<div class="ln" style="left:8px;top:572px;width:1498px;height:25px;background:#f4f5f5"></div>
<div class="ln" style="left:8px;top:572px;width:1498px;height:1px;background:#f9fafa"></div>
<div class="hc" style="left:55.8px;top:578px;letter-spacing:-0.177px">Event date</div>
<div class="hc" style="left:131px;top:578px;letter-spacing:-0.241px">Type</div>
<div class="hc" style="left:176.6px;top:578px;letter-spacing:-0.902px">Remai…</div>
<div class="hc" style="left:251.4px;top:578px;letter-spacing:-0.279px">Used</div>
<div class="hc" style="left:314px;top:578px;letter-spacing:-0.076px">Unit</div>
<div class="hc" style="left:355.7px;top:578px;letter-spacing:-0.063px">Unit price</div>
<div class="hc" style="left:426.5px;top:578px;letter-spacing:-0.309px">Cur.</div>
<div class="hc" style="left:473px;top:578px;letter-spacing:-0.327px">Rate</div>
<div class="hc" style="left:518.4px;top:578px;letter-spacing:-0.180px">Value</div>
<div class="hc" style="left:589px;top:578px;letter-spacing:-0.309px">Cur.</div>
<div class="hc" style="left:634.6px;top:578px;letter-spacing:-0.106px">Cur. unit pice</div>
<div class="hc" style="left:722.7px;top:578px;letter-spacing:0.043px">Price from</div>
<div class="hc" style="left:1022.7px;top:578px;letter-spacing:-0.005px">Time</div>
<div class="hc" style="left:1080.8px;top:578px;letter-spacing:-0.102px">Event amount</div>
<div class="hc" style="left:1172.5px;top:578px;letter-spacing:-0.086px">Balance after event</div>
<div class="hc" style="left:1297.3px;top:578px;letter-spacing:-0.039px">Id</div>
<svg class="a" style="left:223px;top:579px" width="8" height="11" viewBox="0 0 8 11"><path d="M4 2V9.3" stroke="#7a8590" stroke-width="0.9"/><path d="M1.6 6.8L4 9.4L6.4 6.8" fill="none" stroke="#7a8590" stroke-width="0.9"/></svg>
<div class="ln" style="left:128px;top:578px;width:1px;height:13px;background:#d3d6d9"></div>
<div class="ln" style="left:174px;top:578px;width:1px;height:13px;background:#d3d6d9"></div>
<div class="ln" style="left:249px;top:578px;width:1px;height:13px;background:#d3d6d9"></div>
<div class="ln" style="left:311px;top:578px;width:1px;height:13px;background:#d3d6d9"></div>
<div class="ln" style="left:353px;top:578px;width:1px;height:13px;background:#d3d6d9"></div>
<div class="ln" style="left:424px;top:578px;width:1px;height:13px;background:#d3d6d9"></div>
<div class="ln" style="left:470px;top:578px;width:1px;height:13px;background:#d3d6d9"></div>
<div class="ln" style="left:586px;top:578px;width:1px;height:13px;background:#d3d6d9"></div>
<div class="ln" style="left:632px;top:578px;width:1px;height:13px;background:#d3d6d9"></div>
<div class="ln" style="left:720px;top:578px;width:1px;height:13px;background:#d3d6d9"></div>
<div class="ln" style="left:1020px;top:578px;width:1px;height:13px;background:#d3d6d9"></div>
<div class="ln" style="left:1078px;top:578px;width:1px;height:13px;background:#d3d6d9"></div>
<div class="ln" style="left:1170px;top:578px;width:1px;height:13px;background:#d3d6d9"></div>
<div class="ln" style="left:1295px;top:578px;width:1px;height:13px;background:#d3d6d9"></div>
<div class="ln" style="left:1420px;top:578px;width:1px;height:13px;background:#d3d6d9"></div>
<svg class="a" style="left:11px;top:578px" width="26" height="14" viewBox="0 0 26 14"><path d="M4.45 2.34L4.55 0.78L6.45 0.78L6.55 2.34L7.56 2.75L8.73 1.73L10.07 3.07L9.05 4.24L9.46 5.25L11.02 5.35L11.02 7.25L9.46 7.35L9.05 8.36L10.07 9.53L8.73 10.87L7.56 9.85L6.55 10.26L6.45 11.82L4.55 11.82L4.45 10.26L3.44 9.85L2.27 10.87L0.93 9.53L1.95 8.36L1.54 7.35L-0.02 7.25L-0.02 5.35L1.54 5.25L1.95 4.24L0.93 3.07L2.27 1.73L3.44 2.75Z" fill="none" stroke="#6e6e6e" stroke-width="1"/><ellipse cx="5.5" cy="6.3" rx="1.25" ry="1.95" fill="none" stroke="#6e6e6e" stroke-width="1"/><path d="M15.9 4.5H21.9L18.9 7.5Z" fill="#747474"/></svg>
<div class="a" style="left:8px;top:598px;width:1413px;height:23px;background:#fff;border-bottom:1px solid #d9dde0;color:#141414">
<div class="c" style="left:4px;top:4.5px;letter-spacing:-0.338px">1.</div>
<svg class="a" style="left:16px;top:6px;opacity:1.0" width="12" height="12" viewBox="0 0 12 12"><circle cx="6" cy="6" r="5.3" fill="none" stroke="#a8d4e2" stroke-width="1.05"/><path d="M3.0 6H6.6" stroke="#a8d4e2" stroke-width="1.6"/><path d="M5.5 3.1L9.0 6L5.5 8.9Z" fill="#a8d4e2"/></svg>
<div class="c" style="left:45.5px;width:74.80000000000001px;text-align:center;top:4.5px"><span style="letter-spacing:-0.298px">08.05.2023</span></div>
<div class="c" style="left:124.80000000000001px;width:41.5px;top:4.5px"><span style="display:inline-block;letter-spacing:-0.300px;transform:scaleX(0.9808);transform-origin:left">LI</span></div>
<div class="c" style="left:166.3px;width:75.1px;text-align:center;top:4.5px"><span style="letter-spacing:-0.271px">404</span></div>
<div class="c" style="left:241.4px;width:61.900000000000006px;text-align:center;top:4.5px"><span style="letter-spacing:-0.271px">202</span></div>
<div class="c" style="left:308.0px;width:37.3px;top:4.5px"><span style="letter-spacing:-0.146px">kpl</span></div>
<div class="c" style="left:345.3px;width:65.39999999999996px;text-align:right;top:4.5px"><span style="display:inline-block;letter-spacing:-0.300px;transform:scaleX(0.9742);transform-origin:right">24,00</span></div>
<div class="c" style="left:420.7px;width:41.800000000000026px;top:4.5px"><span style="display:inline-block;letter-spacing:-0.300px;transform:scaleX(0.8549);transform-origin:left">EUR</span></div>
<div class="c" style="left:462.5px;width:39.3px;text-align:right;top:4.5px"><span style="display:inline-block;letter-spacing:-0.300px;transform:scaleX(0.9742);transform-origin:right">1,000</span></div>
<div class="c" style="left:506px;width:66.9px;text-align:right;top:4.5px"><span style="display:inline-block;letter-spacing:-0.300px;transform:scaleX(0.9835);transform-origin:right">4848,00</span></div>
<div class="c" style="left:583.1px;width:41.50000000000002px;top:4.5px"><span style="display:inline-block;letter-spacing:-0.300px;transform:scaleX(0.8549);transform-origin:left">EUR</span></div>
<div class="c" style="left:624.6px;width:81.49999999999996px;text-align:right;top:4.5px"><span style="display:inline-block;letter-spacing:-0.300px;transform:scaleX(0.9742);transform-origin:right">24,00</span></div>
<div class="c" style="left:716.4px;width:296.0px;top:4.5px"><span style="letter-spacing:-0.235px">product foreign purchase price</span></div>
<div class="c" style="left:1012.4px;width:58.000000000000114px;text-align:center;top:4.5px"><span style="display:inline-block;letter-spacing:-0.300px;transform:scaleX(0.9886);transform-origin:center">19:45:21</span></div>
<div class="c" style="left:1070.4px;width:92.09999999999991px;text-align:center;top:4.5px"><span style="letter-spacing:-0.271px">202</span></div>
<div class="c" style="left:1162.5px;width:125.0px;text-align:center;top:4.5px;color:#2222ff"><span style="letter-spacing:-0.271px">404</span></div>
<div class="c" style="left:1291.5px;width:120.79999999999995px;top:4.5px"><span style="letter-spacing:-0.271px">110002882</span></div>
</div>
<div class="a" style="left:8px;top:621px;width:1413px;height:22px;background:#fafbfd;border-bottom:1px solid #d9dde0;color:#141414">
<div class="c" style="left:4px;top:4.5px;letter-spacing:-0.338px">2.</div>
<svg class="a" style="left:16px;top:6px;opacity:1.0" width="12" height="12" viewBox="0 0 12 12"><circle cx="6" cy="6" r="5.3" fill="none" stroke="#a8d4e2" stroke-width="1.05"/><path d="M3.0 6H6.6" stroke="#a8d4e2" stroke-width="1.6"/><path d="M5.5 3.1L9.0 6L5.5 8.9Z" fill="#a8d4e2"/></svg>
<div class="c" style="left:45.5px;width:74.80000000000001px;text-align:center;top:4.5px"><span style="letter-spacing:-0.298px">08.05.2023</span></div>
<div class="c" style="left:124.80000000000001px;width:41.5px;top:4.5px"><span style="display:inline-block;letter-spacing:-0.300px;transform:scaleX(0.9808);transform-origin:left">LI</span></div>
<div class="c" style="left:166.3px;width:75.1px;text-align:center;top:4.5px"><span style="letter-spacing:-0.271px">202</span></div>
<div class="c" style="left:241.4px;width:61.900000000000006px;text-align:center;top:4.5px"><span style="letter-spacing:-0.271px">202</span></div>
<div class="c" style="left:308.0px;width:37.3px;top:4.5px"><span style="letter-spacing:-0.146px">kpl</span></div>
<div class="c" style="left:345.3px;width:65.39999999999996px;text-align:right;top:4.5px"><span style="display:inline-block;letter-spacing:-0.300px;transform:scaleX(0.9742);transform-origin:right">24,00</span></div>
<div class="c" style="left:420.7px;width:41.800000000000026px;top:4.5px"><span style="display:inline-block;letter-spacing:-0.300px;transform:scaleX(0.8549);transform-origin:left">EUR</span></div>
<div class="c" style="left:462.5px;width:39.3px;text-align:right;top:4.5px"><span style="display:inline-block;letter-spacing:-0.300px;transform:scaleX(0.9742);transform-origin:right">1,000</span></div>
<div class="c" style="left:506px;width:66.9px;text-align:right;top:4.5px"><span style="display:inline-block;letter-spacing:-0.300px;transform:scaleX(0.9835);transform-origin:right">4848,00</span></div>
<div class="c" style="left:583.1px;width:41.50000000000002px;top:4.5px"><span style="display:inline-block;letter-spacing:-0.300px;transform:scaleX(0.8549);transform-origin:left">EUR</span></div>
<div class="c" style="left:624.6px;width:81.49999999999996px;text-align:right;top:4.5px"><span style="display:inline-block;letter-spacing:-0.300px;transform:scaleX(0.9742);transform-origin:right">24,00</span></div>
<div class="c" style="left:716.4px;width:296.0px;top:4.5px"><span style="letter-spacing:-0.235px">product foreign purchase price</span></div>
<div class="c" style="left:1012.4px;width:58.000000000000114px;text-align:center;top:4.5px"><span style="display:inline-block;letter-spacing:-0.300px;transform:scaleX(0.9886);transform-origin:center">19:45:21</span></div>
<div class="c" style="left:1070.4px;width:92.09999999999991px;text-align:center;top:4.5px"><span style="letter-spacing:-0.271px">202</span></div>
<div class="c" style="left:1162.5px;width:125.0px;text-align:center;top:4.5px"><span style="letter-spacing:-0.271px">202</span></div>
<div class="c" style="left:1291.5px;width:120.79999999999995px;top:4.5px"><span style="letter-spacing:-0.271px">110002881</span></div>
</div>
<div class="a" style="left:8px;top:643px;width:1413px;height:23px;background:#fff;border-bottom:1px solid #d9dde0;color:#8c8c8c">
<div class="c" style="left:4px;top:4.5px;letter-spacing:-0.338px">3.</div>
<svg class="a" style="left:16px;top:6px;opacity:1.0" width="12" height="12" viewBox="0 0 12 12"><circle cx="6" cy="6" r="5.3" fill="none" stroke="#a8d4e2" stroke-width="1.05"/><path d="M3.0 6H6.6" stroke="#a8d4e2" stroke-width="1.6"/><path d="M5.5 3.1L9.0 6L5.5 8.9Z" fill="#a8d4e2"/></svg>
<div class="c" style="left:45.5px;width:74.80000000000001px;text-align:center;top:4.5px"><span style="letter-spacing:-0.298px">12.04.2023</span></div>
<div class="c" style="left:124.80000000000001px;width:41.5px;top:4.5px"><span style="display:inline-block;letter-spacing:-0.300px;transform:scaleX(0.9849);transform-origin:left">IN</span></div>
<div class="c" style="left:166.3px;width:75.1px;text-align:center;top:4.5px"><span style="letter-spacing:-0.271px">0</span></div>
<div class="c" style="left:241.4px;width:61.900000000000006px;text-align:center;top:4.5px"><span style="letter-spacing:-0.271px">0</span></div>
<div class="c" style="left:308.0px;width:37.3px;top:4.5px"><span style="letter-spacing:-0.146px">kpl</span></div>
<div class="c" style="left:345.3px;width:65.39999999999996px;text-align:right;top:4.5px"><span style="display:inline-block;letter-spacing:-0.300px;transform:scaleX(0.9655);transform-origin:right">0,00</span></div>
<div class="c" style="left:420.7px;width:41.800000000000026px;top:4.5px"><span style="display:inline-block;letter-spacing:-0.300px;transform:scaleX(0.8549);transform-origin:left">EUR</span></div>
<div class="c" style="left:583.1px;width:41.50000000000002px;top:4.5px"><span style="display:inline-block;letter-spacing:-0.300px;transform:scaleX(0.8549);transform-origin:left">EUR</span></div>
<div class="c" style="left:716.4px;width:296.0px;top:4.5px"><span style="letter-spacing:-0.219px">stock event purchase price / unit</span></div>
<div class="c" style="left:1012.4px;width:58.000000000000114px;text-align:center;top:4.5px"><span style="display:inline-block;letter-spacing:-0.300px;transform:scaleX(0.9886);transform-origin:center">14:08:54</span></div>
<div class="c" style="left:1070.4px;width:92.09999999999991px;text-align:center;top:4.5px"><span style="letter-spacing:-0.271px">0</span></div>
<div class="c" style="left:1162.5px;width:125.0px;text-align:center;top:4.5px"><span style="letter-spacing:-0.271px">0</span></div>
<div class="c" style="left:1291.5px;width:120.79999999999995px;top:4.5px"><span style="letter-spacing:-0.271px">110002807</span></div>
</div>
<div class="a" style="left:8px;top:665px;width:1413px;height:23px;background:#e8ebec;border-bottom:1px solid #e0e3e5;color:#8c8c8c">
<div style="position:absolute;left:0;top:1px;width:100%;height:0"></div>
<div class="c" style="left:4px;top:5.5px;letter-spacing:-0.338px">4.</div>
<svg class="a" style="left:16px;top:7px;opacity:1.0" width="12" height="12" viewBox="0 0 12 12"><circle cx="6" cy="6" r="5.3" fill="none" stroke="#a8d4e2" stroke-width="1.05"/><path d="M3.0 6H6.6" stroke="#a8d4e2" stroke-width="1.6"/><path d="M5.5 3.1L9.0 6L5.5 8.9Z" fill="#a8d4e2"/></svg>
<div class="c" style="left:45.5px;width:74.80000000000001px;text-align:center;top:5.5px"><span style="letter-spacing:-0.298px">13.08.2022</span></div>
<div class="c" style="left:124.80000000000001px;width:41.5px;top:5.5px"><span style="display:inline-block;letter-spacing:-0.300px;transform:scaleX(0.9849);transform-origin:left">IN</span></div>
<div class="c" style="left:166.3px;width:75.1px;text-align:center;top:5.5px"><span style="letter-spacing:-0.271px">0</span></div>
<div class="c" style="left:241.4px;width:61.900000000000006px;text-align:center;top:5.5px"><span style="letter-spacing:-0.271px">0</span></div>
<div class="c" style="left:308.0px;width:37.3px;top:5.5px"><span style="letter-spacing:-0.146px">kpl</span></div>
<div class="c" style="left:345.3px;width:65.39999999999996px;text-align:right;top:5.5px"><span style="display:inline-block;letter-spacing:-0.300px;transform:scaleX(0.9655);transform-origin:right">0,00</span></div>
<div class="c" style="left:420.7px;width:41.800000000000026px;top:5.5px"><span style="display:inline-block;letter-spacing:-0.300px;transform:scaleX(0.8549);transform-origin:left">EUR</span></div>
<div class="c" style="left:583.1px;width:41.50000000000002px;top:5.5px"><span style="display:inline-block;letter-spacing:-0.300px;transform:scaleX(0.8549);transform-origin:left">EUR</span></div>
<div class="c" style="left:716.4px;width:296.0px;top:5.5px"><span style="letter-spacing:-0.219px">stock event purchase price / unit</span></div>
<div class="c" style="left:1012.4px;width:58.000000000000114px;text-align:center;top:5.5px"><span style="display:inline-block;letter-spacing:-0.300px;transform:scaleX(0.9886);transform-origin:center">11:24:11</span></div>
<div class="c" style="left:1070.4px;width:92.09999999999991px;text-align:center;top:5.5px"><span style="letter-spacing:-0.271px">3</span></div>
<div class="c" style="left:1162.5px;width:125.0px;text-align:center;top:5.5px"><span style="letter-spacing:-0.271px">35</span></div>
<div class="c" style="left:1291.5px;width:120.79999999999995px;top:5.5px"><span style="letter-spacing:-0.271px">110001492</span></div>
</div>
<div class="a" style="left:8px;top:688px;width:1413px;height:23px;background:#fff;border-bottom:1px solid #d9dde0;color:#8c8c8c">
<div class="c" style="left:4px;top:4.5px;letter-spacing:-0.338px">5.</div>
<svg class="a" style="left:16px;top:6px;opacity:1.0" width="12" height="12" viewBox="0 0 12 12"><circle cx="6" cy="6" r="5.3" fill="none" stroke="#a8d4e2" stroke-width="1.05"/><path d="M3.0 6H6.6" stroke="#a8d4e2" stroke-width="1.6"/><path d="M5.5 3.1L9.0 6L5.5 8.9Z" fill="#a8d4e2"/></svg>
<div class="c" style="left:45.5px;width:74.80000000000001px;text-align:center;top:4.5px"><span style="letter-spacing:-0.298px">13.08.2022</span></div>
<div class="c" style="left:124.80000000000001px;width:41.5px;top:4.5px"><span style="display:inline-block;letter-spacing:-0.300px;transform:scaleX(0.9849);transform-origin:left">IN</span></div>
<div class="c" style="left:166.3px;width:75.1px;text-align:center;top:4.5px"><span style="letter-spacing:-0.271px">0</span></div>
<div class="c" style="left:241.4px;width:61.900000000000006px;text-align:center;top:4.5px"><span style="letter-spacing:-0.271px">0</span></div>
<div class="c" style="left:308.0px;width:37.3px;top:4.5px"><span style="letter-spacing:-0.146px">kpl</span></div>
<div class="c" style="left:345.3px;width:65.39999999999996px;text-align:right;top:4.5px"><span style="display:inline-block;letter-spacing:-0.300px;transform:scaleX(0.9655);transform-origin:right">0,00</span></div>
<div class="c" style="left:420.7px;width:41.800000000000026px;top:4.5px"><span style="display:inline-block;letter-spacing:-0.300px;transform:scaleX(0.8549);transform-origin:left">EUR</span></div>
<div class="c" style="left:583.1px;width:41.50000000000002px;top:4.5px"><span style="display:inline-block;letter-spacing:-0.300px;transform:scaleX(0.8549);transform-origin:left">EUR</span></div>
<div class="c" style="left:716.4px;width:296.0px;top:4.5px"><span style="letter-spacing:-0.219px">stock event purchase price / unit</span></div>
<div class="c" style="left:1012.4px;width:58.000000000000114px;text-align:center;top:4.5px"><span style="display:inline-block;letter-spacing:-0.300px;transform:scaleX(0.9886);transform-origin:center">11:24:11</span></div>
<div class="c" style="left:1070.4px;width:92.09999999999991px;text-align:center;top:4.5px"><span style="letter-spacing:-0.271px">0</span></div>
<div class="c" style="left:1162.5px;width:125.0px;text-align:center;top:4.5px"><span style="letter-spacing:-0.271px">35</span></div>
<div class="c" style="left:1291.5px;width:120.79999999999995px;top:4.5px"><span style="letter-spacing:-0.271px">110001493</span></div>
</div>
<div class="ln" style="left:7px;top:571px;width:1499px;height:1px;background:#c0c6ca"></div>
<div class="ln" style="left:8px;top:597px;width:1498px;height:1px;background:#c0c6ca"></div>
<div class="ln" style="left:7px;top:571px;width:1px;height:134px;background:#c0c6ca"></div>
<div class="ln" style="left:53px;top:572px;width:1px;height:133px;background:#c8cccf"></div>
<div class="ln" style="left:1504px;top:599px;width:2px;height:106px;background:#e6e6e6"></div>
<div class="a" style="left:1503.5px;top:599px;width:3px;height:20.5px;background:#a3a3a3;border-radius:1.5px 0 0 1.5px"></div>
</body></html>
